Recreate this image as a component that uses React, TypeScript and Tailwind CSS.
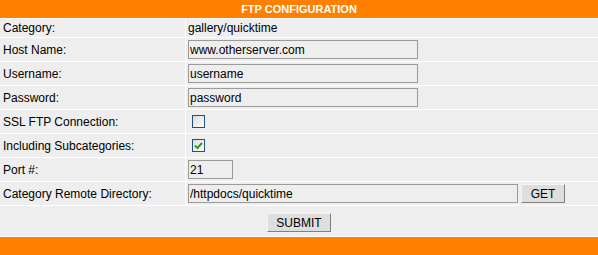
import React from 'react';

const font = "font-['Liberation_Sans',Arial,Helvetica,sans-serif]";

const TextInput = ({ value, width }: { value: string; width: string }) => (
  <input
    readOnly
    value={value}
    className={`${width} h-[19px] border border-[#9a9a9a] bg-[#eeeeee] px-[1px] text-[12px] text-black outline-none ${font}`}
  />
);

const CheckBox = ({ checked }: { checked?: boolean }) => (
  <div className="ml-[4px] flex h-[13px] w-[13px] items-center justify-center border border-[#1c5180] bg-gradient-to-br from-[#dcdcd7] to-white">
    {checked && (
      <svg width="9" height="9" viewBox="0 0 9 9">
        <path d="M1 4.5 L3.5 7 L8 2" stroke="#21a121" strokeWidth="2" fill="none" />
      </svg>
    )}
  </div>
);

const Button = ({ label, width }: { label: string; width: string }) => (
  <button
    className={`${width} h-[19px] border border-t-[#f4f4f4] border-l-[#f4f4f4] border-r-[#808080] border-b-[#808080] bg-[#dedede] text-[12px] leading-none text-black ${font}`}
  >
    {label}
  </button>
);

const Row = ({ label, h, children }: { label: string; h: string; children: React.ReactNode }) => (
  <div className={`grid grid-cols-[185px_1fr] gap-px ${h}`}>
    <div className="flex items-center bg-[#eeeeee] pl-[3px] text-[12px] text-black">{label}</div>
    <div className="flex items-center bg-[#eeeeee] pl-[2px] text-[12px] text-black">{children}</div>
  </div>
);

export default function App() {
  return (
    <div className={`flex h-[255px] w-[598px] flex-col gap-px bg-white ${font}`}>
      <div className="flex h-[18px] items-center justify-center bg-[#ff8000] text-[11px] font-bold text-white">
        FTP CONFIGURATION
      </div>
      <Row label="Category:" h="h-[18px]">
        <span>gallery/quicktime</span>
      </Row>
      <Row label="Host Name:" h="h-[23px]">
        <TextInput value="www.otherserver.com" width="w-[230px]" />
      </Row>
      <Row label="Username:" h="h-[23px]">
        <TextInput value="username" width="w-[230px]" />
      </Row>
      <Row label="Password:" h="h-[23px]">
        <TextInput value="password" width="w-[230px]" />
      </Row>
      <Row label="SSL FTP Connection:" h="h-[23px]">
        <CheckBox />
      </Row>
      <Row label="Including Subcategories:" h="h-[23px]">
        <CheckBox checked />
      </Row>
      <Row label="Port #:" h="h-[23px]">
        <TextInput value="21" width="w-[45px]" />
      </Row>
      <Row label="Category Remote Directory:" h="h-[23px]">
        <div className="flex items-center gap-[3px]">
          <TextInput value="/httpdocs/quicktime" width="w-[330px]" />
          <Button label="GET" width="w-[44px]" />
        </div>
      </Row>
      <div className="flex h-[30px] justify-center bg-[#eeeeee] pt-[7px]">
        <Button label="SUBMIT" width="w-[64px]" />
      </div>
      <div className="flex-1 bg-[#ff8000]" />
    </div>
  );
}
